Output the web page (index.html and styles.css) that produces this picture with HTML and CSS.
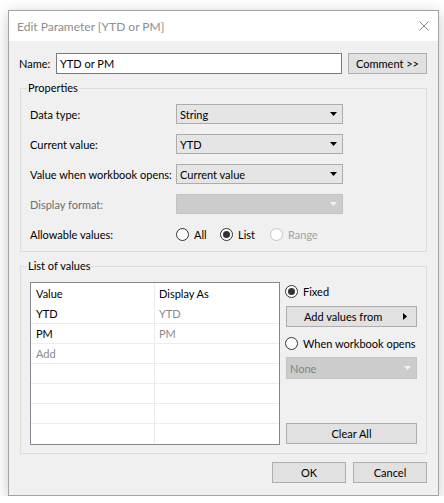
FILE: index.html
```html
<!DOCTYPE html>
<html>
<head>
<meta charset="utf-8">
<link rel="stylesheet" href="styles.css">
</head>
<body>
<div class="dialog">
  <div class="titlebar">
    <span class="title">Edit Parameter [YTD or PM]</span>
    <svg class="close" width="10" height="10" viewBox="0 0 10 10"><path d="M0.5 0.5 L9.5 9.5 M9.5 0.5 L0.5 9.5" stroke="#8a8a8a" stroke-width="1" fill="none"/></svg>
  </div>
  <div class="content">
    <div class="name-row">
      <span class="name-label">Name:</span>
      <div class="textbox">YTD or PM</div>
      <div class="btn comment">Comment &gt;&gt;</div>
    </div>

    <fieldset class="group props">
      <legend>Properties</legend>
      <div class="rows">
        <div class="prop-row"><span class="plabel">Data type:</span><div class="combo"><span>String</span><svg class="arr" width="7" height="4" viewBox="0 0 7 4"><path d="M0 0 H7 L3.5 4 Z" fill="#000"/></svg></div></div>
        <div class="prop-row"><span class="plabel">Current value:</span><div class="combo"><span>YTD</span><svg class="arr" width="7" height="4" viewBox="0 0 7 4"><path d="M0 0 H7 L3.5 4 Z" fill="#000"/></svg></div></div>
        <div class="prop-row"><span class="plabel">Value when workbook opens:</span><div class="combo"><span>Current value</span><svg class="arr" width="7" height="4" viewBox="0 0 7 4"><path d="M0 0 H7 L3.5 4 Z" fill="#000"/></svg></div></div>
        <div class="prop-row"><span class="plabel disabled">Display format:</span><div class="combo off"><span></span><svg class="arr" width="7" height="4" viewBox="0 0 7 4"><path d="M0 0 H7 L3.5 4 Z" fill="#f2f2f2"/></svg></div></div>
        <div class="prop-row"><span class="plabel">Allowable values:</span>
          <div class="radios">
            <span class="radio-item w-all"><span class="radio"></span>All</span>
            <span class="radio-item w-list"><span class="radio on"><span class="dot"></span></span>List</span>
            <span class="radio-item disabled-r"><span class="radio dis"></span>Range</span>
          </div>
        </div>
      </div>
    </fieldset>

    <fieldset class="group listgroup">
      <legend>List of values</legend>
      <div class="list-layout">
        <div class="grid">
          <div class="cell c1 hdr">Value</div><div class="cell c2 hdr">Display As</div>
          <div class="cell c1 ln">YTD</div><div class="cell c2 ln gray">YTD</div>
          <div class="cell c1 ln">PM</div><div class="cell c2 ln gray">PM</div>
          <div class="cell c1 ln gray">Add</div><div class="cell c2 ln"></div>
          <div class="cell c1 ln"></div><div class="cell c2 ln"></div>
          <div class="cell c1 ln"></div><div class="cell c2 ln"></div>
          <div class="cell c1 ln"></div><div class="cell c2 ln"></div>
          <div class="cell c1"></div><div class="cell c2"></div>
        </div>
        <div class="side">
          <div class="side-radio"><span class="radio on"><span class="dot"></span></span>Fixed</div>
          <div class="btn addvals"><span>Add values from</span><svg width="4" height="7" viewBox="0 0 4 7"><path d="M0 0 L4 3.5 L0 7 Z" fill="#000"/></svg></div>
          <div class="side-radio when"><span class="radio"></span>When workbook opens</div>
          <div class="combo off none"><span>None</span><svg class="arr" width="7" height="4" viewBox="0 0 7 4"><path d="M0 0 H7 L3.5 4 Z" fill="#f2f2f2"/></svg></div>
          <div class="btn clearall">Clear All</div>
        </div>
      </div>
    </fieldset>

    <div class="footer">
      <div class="btn fbtn">OK</div>
      <div class="btn fbtn">Cancel</div>
    </div>
  </div>
</div>
</body>
</html>
```

FILE: styles.css
```css
body {
  margin: 0;
  background: #ffffff;
  font-family: Lato, "Noto Sans", sans-serif;
  font-size: 11px;
  color: #000;
}

.dialog {
  margin: 10px 0 0 8px;
  width: 431px;
  height: 486px;
  box-sizing: border-box;
  border: 1px solid #a3a3a3;
  background: #f0f0f0;
  box-shadow: 0 3px 14px rgba(0, 0, 0, 0.22);
  display: flex;
  flex-direction: column;
}

.titlebar {
  flex: none;
  height: 30px;
  background: #ffffff;
  display: flex;
  align-items: center;
  justify-content: space-between;
  padding: 0 9px 0 8px;
}

.title {
  font-size: 12px;
  color: #8e8e8e;
}

.close {
  display: block;
}

.content {
  flex: 1;
  padding: 12px 11px 0 11px;
}

.name-row {
  display: flex;
  height: 21px;
}

.name-label {
  width: 37px;
  display: flex;
  align-items: center;
  margin-left: -1px;
  padding-left: 0;
  box-sizing: border-box;
  flex: none;
}

.textbox {
  width: 286px;
  box-sizing: border-box;
  border: 1px solid #7a7a7a;
  background: #fff;
  padding-left: 3px;
  display: flex;
  align-items: center;
}

.btn {
  box-sizing: border-box;
  height: 21px;
  border: 1px solid #adadad;
  background: #e1e1e1;
  display: flex;
  align-items: center;
  justify-content: center;
}

.comment {
  width: 79px;
  margin-left: 6px;
}

.group {
  margin: 6px 0 0 0;
  border: 1px solid #dcdcdc;
  min-width: 0;
}

.group legend {
  line-height: 16px;
  padding: 0 1px;
  margin-left: -3px;
}

.props {
  padding: 8px 0 7px 9px;
}

.rows {
  display: flex;
  flex-direction: column;
  gap: 10px;
}

.prop-row {
  display: flex;
  align-items: center;
  height: 20px;
}

.plabel {
  width: 146px;
  flex: none;
}

.disabled {
  color: #6d6d6d;
}

.combo {
  width: 167px;
  height: 20px;
  box-sizing: border-box;
  border: 1px solid #acacac;
  background: #e5e5e5;
  display: flex;
  align-items: center;
  justify-content: space-between;
  padding: 0 5px 0 3px;
}

.combo.off {
  background: #cccccc;
  border-color: #c2c2c2;
  color: #838383;
}

.arr {
  display: block;
}

.radios {
  display: flex;
  align-items: center;
}

.radio-item {
  display: flex;
  align-items: center;
  gap: 5px;
}

.w-all {
  width: 44px;
}

.w-list {
  width: 50px;
}

.disabled-r {
  color: #a3a3a3;
}

.radio {
  width: 13px;
  height: 13px;
  box-sizing: border-box;
  border: 1px solid #333333;
  border-radius: 50%;
  background: #ffffff;
  display: flex;
  align-items: center;
  justify-content: center;
  flex: none;
}

.radio.dis {
  border-color: #c4c4c4;
}

.dot {
  width: 7px;
  height: 7px;
  border-radius: 50%;
  background: #333333;
}

.listgroup {
  padding: 8px 9px 8px 9px;
}

.list-layout {
  display: flex;
  gap: 6px;
}

.grid {
  width: 250px;
  height: 163px;
  box-sizing: border-box;
  border: 1px solid #828790;
  background: #ffffff;
  display: grid;
  grid-template-columns: 124px 1fr;
  grid-template-rows: 21px repeat(7, 20px);
}

.cell {
  box-sizing: border-box;
  display: flex;
  align-items: center;
}

.c1 {
  border-right: 1px solid #ececec;
  padding-left: 5px;
}

.c2 {
  padding-left: 4px;
}

.ln {
  border-bottom: 1px solid #ececec;
}

.gray {
  color: #8a8a8a;
}

.side {
  width: 131px;
  display: flex;
  flex-direction: column;
}

.side-radio {
  height: 18px;
  display: flex;
  align-items: center;
  gap: 5px;
  margin-left: -1px;
}

.addvals {
  margin-top: 6px;
  justify-content: space-between;
  padding: 0 9px 0 17px;
}

.addvals svg {
  display: block;
}

.when {
  margin-top: 7px;
}

.none {
  width: 131px;
  height: 22px;
  margin-top: 5px;
}

.clearall {
  margin-top: auto;
  margin-bottom: 1px;
}

.footer {
  display: flex;
  justify-content: flex-end;
  gap: 7px;
  margin-top: 8px;
}

.fbtn {
  width: 74px;
}
```
